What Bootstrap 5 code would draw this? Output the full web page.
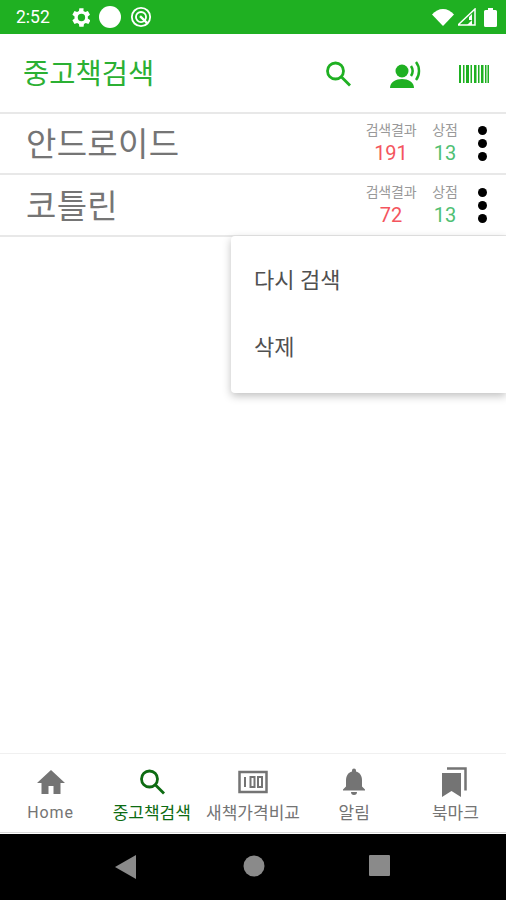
<!DOCTYPE html>
<html lang="ko">
<head>
  <meta charset="UTF-8">
  <meta name="viewport" content="width=device-width, initial-scale=1">
  <title>중고책검색</title>
  <link href="https://cdn.jsdelivr.net/npm/bootstrap@5.3.0/dist/css/bootstrap.min.css" rel="stylesheet">
  <style>
    html, body { height: 100%; }
    body { font-family: Roboto, "Noto Sans CJK KR", sans-serif; background: #fff; overflow: hidden; }
    .phone { height: 900px; width: 506px; position: relative; }
    .status-bar { height: 34px; background: #1fb022; color: #fff; font-size: 17.5px; padding: 0 9px 0 16px; }
    .status-bar .clock { width: 39px; }
    .app-bar { height: 80px; border-bottom: 2px solid #e8e8e8; padding: 2px 17px 0 23px; }
    .app-title { color: #2bb033; font-size: 28.500px; line-height: 1; margin: 2px 0 0; font-weight: 400; }
    .app-icon-gap { margin-left: 36px; }
    .book-row { height: 61px; border-bottom: 2px solid #e8e8e8; padding: 2px 19px 0 26px; }
    .book-row.second { height: 62px; }
    .book-name { color: #757575; font-size: 33px; line-height: 1; letter-spacing: .3px; }
    .stat { text-align: center; line-height: 1; margin-bottom: 3px; }
    .stat-label { color: #999; font-size: 14px; letter-spacing: -.2px; margin-bottom: 6px; white-space: nowrap; }
    .stat-value { font-size: 20px; }
    .stat-total { width: 52px; margin-right: 15px; }
    .stat-store { width: 26px; margin-right: 20px; }
    .red { color: #f4555e; }
    .green { color: #4fc073; }
    .dots { width: 9px; gap: 4px; margin-bottom: 2px; }
    .dots i { width: 9px; height: 9px; background: #000; border-radius: 50%; display: block; }
    .popup { position: absolute; top: 236px; left: 231px; right: 0; height: 157px; background: #fff; border-radius: 4px 0 0 4px; box-shadow: 0 3px 9px rgba(0,0,0,.25); padding: 11px 0 0 23px; font-size: 22px; color: #505050; }
    .popup div { height: 67px; display: flex; align-items: center; }
    .tab-bar { position: absolute; top: 753px; left: 0; right: 0; height: 80px; border-top: 1px solid #f0f0f0; border-bottom: 1px solid #d8d8d8; }
    .tab-item { flex: 1 1 0; text-align: center; color: #747474; padding-top: 13px; white-space: nowrap; }
    .tab-item svg { display: block; margin: 0 auto 6px; height: 30px; }
    .tab-item span { font-size: 17px; line-height: 20px; display: block; margin: 0 -6px; }
    .tab-item span.latin { font-size: 16px; letter-spacing: .9px; }
    .tab-item.active { color: #0d6b12; }
    .nav-bar { position: absolute; top: 834px; left: 0; right: 0; height: 66px; background: #000; }
    .nav-slot { position: absolute; top: 21px; }
    .nav-back { left: 115px; }
    .nav-home { left: 243px; }
    .nav-recent { left: 369px; }
  </style>
</head>
<body>
  <div class="phone">
    <div class="status-bar d-flex align-items-center">
      <span class="clock">2:52</span>
      <svg class="ms-3" width="19" height="19" viewBox="2.500 3 18 18" fill="#fff"><path d="M19.4 13a7.5 7.5 0 0 0 0-2l2.1-1.6-2-3.5-2.5 1a7.500 7.500 0 0 0-1.700-1L15.400 3.200h-4l-.4 2.700a7.500 7.500 0 0 0-1.700 1l-2.500-1-2 3.500L6.900 11a7.500 7.500 0 0 0 0 2l-2.100 1.600 2 3.500 2.500-1a7.500 7.500 0 0 0 1.700 1l.4 2.700h4l.4-2.700a7.500 7.500 0 0 0 1.700-1l2.500 1 2-3.500zM13.400 15.500a3.500 3.500 0 1 1 0-7 3.500 3.500 0 0 1 0 7z" transform="translate(-1)"/></svg>
      <svg class="ms-2" width="24" height="24" viewBox="0 0 24 24" fill="#fff"><circle cx="12" cy="12" r="11"/></svg>
      <svg class="ms-2" width="22" height="22" viewBox="0 0 24 24" fill="none" stroke="#fff" stroke-width="2"><circle cx="12" cy="12" r="10"/><circle cx="12" cy="12" r="5.500"/><path d="M11 11l8 8" stroke-width="2.500"/></svg>
      <span class="flex-grow-1"></span>
      <svg width="22" height="17" viewBox="0 0 22 17" fill="#fff"><path d="M0 5.500C3 2 7 0 11 0s8 2 11 5.500L11 17z"/></svg>
      <svg class="ms-1" width="18" height="18" viewBox="0 0 18 18"><path d="M0 17L17 1v16z" fill="none" stroke="#fff" stroke-width="1.500"/><path d="M9 17l5-5v5zM11 9l3-3v6h-3z" fill="#fff"/></svg>
      <svg class="ms-2" width="13" height="19" viewBox="0 0 13 19" fill="#fff"><path d="M4 0h5v2h2.500a1.500 1.500 0 0 1 1.500 1.500v14a1.500 1.500 0 0 1-1.500 1.500h-10A1.500 1.500 0 0 1 0 17.500v-14A1.500 1.500 0 0 1 1.500 2H4z"/></svg>
    </div>

    <div class="app-bar d-flex align-items-center">
      <h1 class="app-title flex-grow-1">중고책검색</h1>
      <svg width="30" height="30" viewBox="0 0 30 30" fill="none" stroke="#1fb022" stroke-width="2.800"><circle cx="12.500" cy="12" r="8"/><path d="M18.500 18l8.500 8.500"/></svg>
      <svg class="app-icon-gap" width="34" height="30" viewBox="0 0 34 30" fill="#1fb022"><circle cx="13" cy="12" r="6.500"/><path d="M1 29c0-6 6-9 12-9s12 3 12 9z"/><path d="M22 7c2 3 2 7 0 10M27 3c4 5 4 13 0 18" fill="none" stroke="#1fb022" stroke-width="2.500"/></svg>
      <svg class="app-icon-gap" width="30" height="20" viewBox="0 0 30 20" fill="#1fb022"><path d="M0 1h2v18H0zM4 1h1.500v18H4zM7 1h3v18H7zM11.500 1H13v18h-1.500zM15 1h2.500v18H15zM19 1h1.500v18H19zM22 1h2.500v18H22zM26 1h1.500v18H26zM28.500 1H30v18h-1.500z"/></svg>
    </div>

    <div class="book-row d-flex align-items-center">
      <div class="book-name flex-grow-1">안드로이드</div>
      <div class="stat stat-total"><div class="stat-label">검색결과</div><div class="stat-value red">191</div></div>
      <div class="stat stat-store"><div class="stat-label">상점</div><div class="stat-value green">13</div></div>
      <div class="dots d-flex flex-column align-items-center"><i></i><i></i><i></i></div>
    </div>
    <div class="book-row second d-flex align-items-center">
      <div class="book-name flex-grow-1">코틀린</div>
      <div class="stat stat-total"><div class="stat-label">검색결과</div><div class="stat-value red">72</div></div>
      <div class="stat stat-store"><div class="stat-label">상점</div><div class="stat-value green">13</div></div>
      <div class="dots d-flex flex-column align-items-center"><i></i><i></i><i></i></div>
    </div>

    <div class="popup">
      <div>다시 검색</div>
      <div>삭제</div>
    </div>

    <div class="tab-bar d-flex">
      <div class="tab-item">
        <svg width="30" height="30" viewBox="0 0 30 30" fill="currentColor"><path d="M15 3L1 16h4.500v11h7v-8h5v8h7V16H29z"/></svg>
        <span class="latin">Home</span>
      </div>
      <div class="tab-item active">
        <svg width="30" height="30" viewBox="0 0 30 30" fill="none" stroke="currentColor" stroke-width="2.800"><circle cx="12.500" cy="12" r="8"/><path d="M18.500 18l8.500 8.500"/></svg>
        <span>중고책검색</span>
      </div>
      <div class="tab-item">
        <svg width="30" height="30" viewBox="0 0 30 30" fill="none" stroke="currentColor"><rect x="1.500" y="5" width="27" height="20" stroke-width="2.500"/><path d="M7 10v10M12.500 10v10h4V10zM20 10v10h4V10z" stroke-width="2"/></svg>
        <span>새책가격비교</span>
      </div>
      <div class="tab-item">
        <svg width="30" height="30" viewBox="0 0 30 30" fill="currentColor"><path d="M15 1.500a2 2 0 0 1 2 2v1c4 1 6 4.500 6 9v6l3 3v1H4v-1l3-3v-6c0-4.500 2-8 6-9v-1a2 2 0 0 1 2-2zM12 25h6a3 3 0 0 1-6 0z"/></svg>
        <span>알림</span>
      </div>
      <div class="tab-item">
        <svg width="30" height="30" viewBox="0 0 30 30" fill="currentColor"><path d="M2 6h19v24l-9.500-6L2 30z"/><path d="M7 1.500h18.500v22" fill="none" stroke="currentColor" stroke-width="2.500"/></svg>
        <span>북마크</span>
      </div>
    </div>

    <div class="nav-bar">
      <svg class="nav-slot nav-back" width="22" height="24" viewBox="0 0 22 24" fill="#8a8a8a"><path d="M21 0v24L0 12z"/></svg>
      <svg class="nav-slot nav-home" width="22" height="22" viewBox="0 0 22 22" fill="#8a8a8a"><circle cx="11" cy="11" r="10.500"/></svg>
      <svg class="nav-slot nav-recent" width="21" height="21" viewBox="0 0 21 21" fill="#8a8a8a"><rect width="21" height="21" rx="1"/></svg>
    </div>
  </div>
  <script src="https://cdn.jsdelivr.net/npm/bootstrap@5.3.0/dist/js/bootstrap.bundle.min.js"></script>
</body>
</html>
